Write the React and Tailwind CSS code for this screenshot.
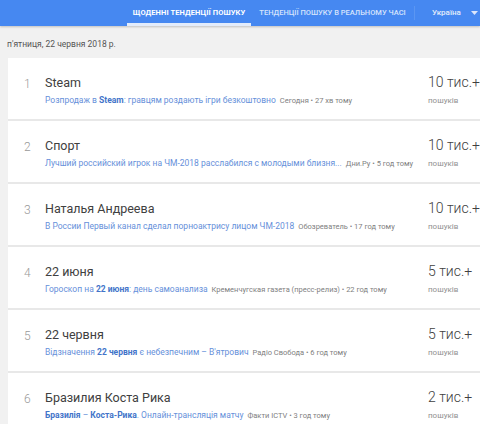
const trends = [
  {
    rank: 1,
    title: 'Steam',
    article: [['Розпродаж в ', false], ['Steam', true], [': гравцям роздають ігри безкоштовно', false]],
    source: 'Сегодня • 27 хв тому',
    count: '10 тис.+',
  },
  {
    rank: 2,
    title: 'Спорт',
    article: [['Лучший российский игрок на ЧМ-2018 расслабился с молодыми близня...', false]],
    source: 'Дни.Ру • 5 год тому',
    count: '10 тис.+',
  },
  {
    rank: 3,
    title: 'Наталья Андреева',
    article: [['В России Первый канал сделал порноактрису лицом ЧМ-2018', false]],
    source: 'Обозреватель • 17 год тому',
    count: '10 тис.+',
  },
  {
    rank: 4,
    title: '22 июня',
    article: [['Гороскоп на ', false], ['22 июня', true], [': день самоанализа', false]],
    source: 'Кременчугская газета (пресс-релиз) • 22 год тому',
    count: '5 тис.+',
  },
  {
    rank: 5,
    title: '22 червня',
    article: [['Відзначення ', false], ['22 червня', true], [' є небезпечним – В\'ятрович', false]],
    source: 'Радіо Свобода • 6 год тому',
    count: '5 тис.+',
  },
  {
    rank: 6,
    title: 'Бразилия Коста Рика',
    article: [['Бразилія', true], [' – ', false], ['Коста-Рика', true], ['. Онлайн-трансляція матчу', false]],
    source: 'Факти ICTV • 3 год тому',
    count: '2 тис.+',
  },
];

const TrendRow = ({ item }) => (
  <div className="flex h-[61px] bg-white">
    <div className="w-[37px] pl-[16px] pt-[17px] text-[12px] font-light text-[#999]">{item.rank}</div>
    <div className="flex-1 min-w-0 pt-[16px]">
      <div className="text-[12.5px] leading-[17px] text-[#404040] whitespace-nowrap">{item.title}</div>
      <div className="mt-[3px] flex items-baseline whitespace-nowrap">
        <span className="text-[8.5px] text-[#6690da]">
          {item.article.map(([t, b], i) => (
            <span key={i} className={b ? 'font-bold text-[#4274c9]' : ''}>{t}</span>
          ))}
        </span>
        <span className="ml-[4px] text-[7.5px] text-[#808080]">{item.source}</span>
      </div>
    </div>
    <div className="w-[52px] pt-[14px] shrink-0">
      <div className="text-[14px] leading-[20px] font-light text-[#404040] whitespace-nowrap">{item.count}</div>
      <div className="mt-[3px] text-[8px] text-[#909090]">пошуків</div>
    </div>
  </div>
);

export default function App() {
  return (
    <div className="w-[480px] h-[424px] overflow-hidden bg-[#f1f1f1]" style={{ fontFamily: 'Roboto, "Noto Sans", sans-serif' }}>
      <div className="h-[26px] bg-[#4688f1] flex items-stretch shadow-[0_1px_2px_rgba(0,0,0,0.2)]">
        <div className="w-[127px]" />
        <div className="w-[124px] flex items-center justify-center border-b-[3px] border-[#e3ecfb] pt-[3px]">
          <span className="text-[7.5px] font-bold text-white tracking-[0.1px]">ЩОДЕННІ ТЕНДЕНЦІЇ ПОШУКУ</span>
        </div>
        <div className="w-[163px] flex items-center justify-center">
          <span className="text-[7.5px] font-medium text-[#d6e4fc]">ТЕНДЕНЦІЇ ПОШУКУ В РЕАЛЬНОМУ ЧАСІ</span>
        </div>
        <div className="my-[6px] w-px bg-[#5b96f2]" />
        <div className="flex items-center pl-[17px] gap-[10px]">
          <span className="text-[8px] font-medium text-[#e3ecfb]">Україна</span>
          <svg width="7" height="4" viewBox="0 0 7 4"><path d="M0 0h7L3.5 4z" fill="#dbe6fb" /></svg>
        </div>
      </div>
      <div className="h-[32px] pl-[7px] pt-[12px] text-[8.5px] text-[#555]">п'ятниця, 22 червня 2018 р.</div>
      <div className="ml-[8px] flex flex-col gap-[2px] bg-[#e8e8e8]">
        {trends.map(item => (
          <TrendRow key={item.rank} item={item} />
        ))}
      </div>
    </div>
  );
}
